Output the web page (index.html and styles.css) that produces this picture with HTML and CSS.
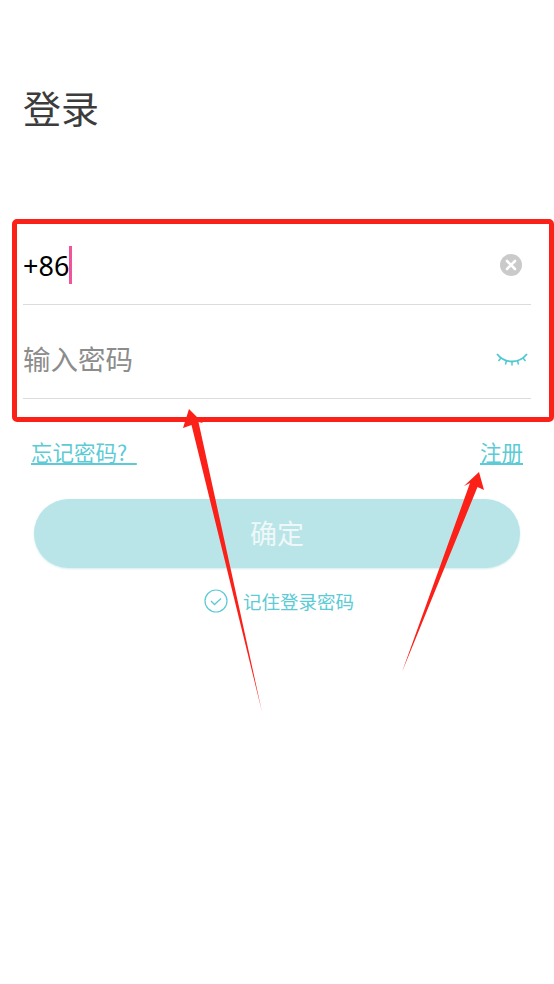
FILE: index.html
```html
<!DOCTYPE html>
<html lang="zh-CN">
<head>
  <meta charset="UTF-8" />
  <meta name="viewport" content="width=device-width, initial-scale=1.0" />
  <title>登录</title>
  <link rel="stylesheet" href="styles.css">
</head>
<body>
  <div class="page">
    <h1 class="title">登录</h1>

    <div class="field field-phone">
      <span class="phone">+86</span><span class="caret"></span>
      <svg class="clear-icon" width="22" height="22" viewBox="0 0 22 22">
        <circle cx="11" cy="11" r="11" fill="#cacaca"/>
        <path d="M7 7l8 8M15 7l-8 8" stroke="#fff" stroke-width="2.6" stroke-linecap="round"/>
      </svg>
    </div>

    <div class="field field-password">
      <span class="placeholder">输入密码</span>
      <svg class="eye-icon" width="32" height="16" viewBox="0 0 32 16">
        <path d="M1 2C9 12 23 12 31 2" fill="none" stroke="#4fc8d2" stroke-width="1.8"/>
        <path d="M5 6L2.500 9M10.500 8.500L9.500 12.500M21.500 8.500L22.500 12.500M27 6L29.500 9M16 10V13.500" fill="none" stroke="#4fc8d2" stroke-width="1.500"/>
      </svg>
    </div>

    <div class="links">
      <a class="link">忘记密码?&nbsp;&nbsp;</a>
      <a class="link">注册</a>
    </div>

    <button class="submit">确定</button>

    <div class="remember">
      <svg width="24" height="24" viewBox="0 0 24 24">
        <circle cx="12" cy="12" r="11" fill="none" stroke="#5ccbd5" stroke-width="1.2"/>
        <path d="M7 12l3.500 3.500L17 9.500" fill="none" stroke="#5ccbd5" stroke-width="1.300"/>
      </svg>
      <span>记住登录密码</span>
    </div>
  </div>

  <!-- red markup drawn over the screenshot -->
  <div class="mark-box"></div>
  <svg class="mark-arrows" width="554" height="984" viewBox="0 0 554 984">
    <path d="M189 409L203 423L198.500 422L262 712L191.500 425L183 428Z" fill="#fb2018"/>
    <path d="M479 472L484 490L477.500 487L402 672L470 483L464 486Z" fill="#fb2018"/>
  </svg>
</body>
</html>
```

FILE: styles.css
```css
body {
  margin: 0;
  background-color: #fff;
  font-family: "Noto Sans CJK SC", "Liberation Sans", sans-serif;
}
.page {
  position: relative;
  height: 984px;
  padding: 0 23px;
  box-sizing: border-box;
  overflow: hidden;
}
.title {
  margin: 0;
  padding-top: 80px;
  height: 142px;
  font-size: 38px;
  line-height: 54px;
  font-weight: 400;
  color: #3c3c3c;
}
.field {
  display: flex;
  align-items: center;
  width: 508px;
  border-bottom: 1px solid #dcdcdc;
  box-sizing: border-box;
}
.field-phone {
  height: 83px;
  padding-top: 4px;
}
.field-password {
  height: 94px;
  padding-top: 13px;
}
.phone {
  font-family: "Noto Sans", sans-serif;
  font-size: 27px;
  color: #000;
}
.caret {
  width: 3px;
  height: 38px;
  background-color: #f0559b;
}
.clear-icon {
  margin-left: auto;
  margin-right: 9px;
}
.placeholder {
  font-size: 27.5px;
  color: #8c8c8c;
}
.eye-icon {
  margin-left: auto;
  margin-top: 3px;
  margin-right: 3px;
}
.links {
  display: flex;
  justify-content: space-between;
  padding: 0 8px;
  margin-top: 37px;
}
.link {
  font-size: 21.5px;
  line-height: 31px;
  color: #5ccbd5;
  text-decoration: underline;
}
.submit {
  display: block;
  width: 486px;
  height: 69px;
  margin: 32px 0 0 11px;
  padding: 0 0 3px;
  border: 0;
  border-radius: 35px;
  background-color: #b9e5e8;
  box-shadow: 0 1px 2px rgba(150, 210, 215, 0.4);
  font-family: inherit;
  font-size: 27px;
  color: #eef8f8;
}
.remember {
  display: flex;
  align-items: center;
  justify-content: center;
  gap: 15px;
  margin-top: 20px;
  padding-left: 4px;
  font-size: 18.5px;
  color: #5ccbd5;
}
.mark-box {
  position: absolute;
  left: 12px;
  top: 219px;
  width: 542px;
  height: 203px;
  box-sizing: border-box;
  border: 5px solid #fb2018;
  border-radius: 5px;
}
.mark-arrows {
  position: absolute;
  left: 0;
  top: 0;
}
```
